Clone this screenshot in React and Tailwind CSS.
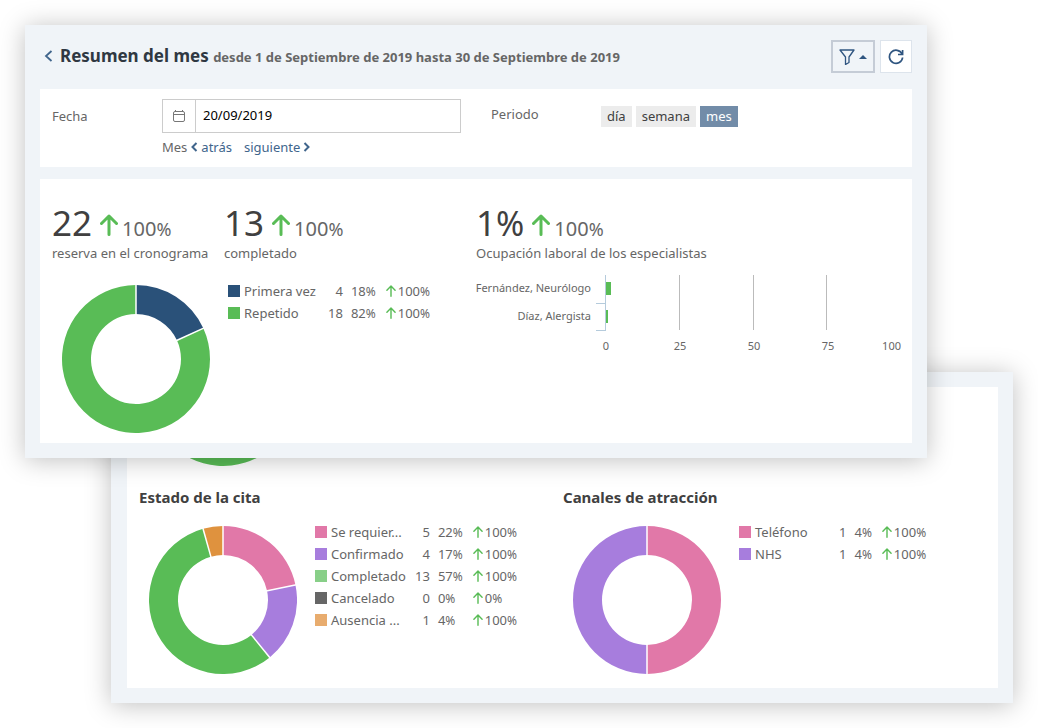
import React from "react";

const visitLegend = [
  { label: "Primera vez", color: "#2a5179", count: 4, share: 18, growth: 100 },
  { label: "Repetido", color: "#59bc56", count: 18, share: 82, growth: 100 },
];

const statusLegend = [
  { label: "Se requier...", color: "#e178a8", count: 5, share: 22, growth: 100 },
  { label: "Confirmado", color: "#a77ddd", count: 4, share: 17, growth: 100 },
  { label: "Completado", color: "#88cf88", count: 13, share: 57, growth: 100 },
  { label: "Cancelado", color: "#666666", count: 0, share: 0, growth: 0 },
  { label: "Ausencia ...", color: "#e8ac6e", count: 1, share: 4, growth: 100 },
];

const channelLegend = [
  { label: "Teléfono", color: "#e178a8", count: 1, share: 4, growth: 100 },
  { label: "NHS", color: "#a77ddd", count: 1, share: 4, growth: 100 },
];

const visitSlices = [
  { value: 4, color: "#2a5179" },
  { value: 18, color: "#59bc56" },
];

const statusSlices = [
  { value: 5, color: "#e178a8" },
  { value: 4, color: "#a77ddd" },
  { value: 13, color: "#59bc56" },
  { value: 1, color: "#df923e" },
];

const channelSlices = [
  { value: 1, color: "#e178a8" },
  { value: 1, color: "#a77ddd" },
];

const specialists = [
  { name: "Fernández, Neurólogo", y: 18, width: 5 },
  { name: "Díaz, Alergista", y: 46, width: 2 },
];

function Donut({ slices, label }) {
  const total = slices.reduce((sum, slice) => sum + slice.value, 0);
  const point = (radius, turn) => {
    const angle = turn * 2 * Math.PI;
    return `${74 + radius * Math.sin(angle)} ${74 - radius * Math.cos(angle)}`;
  };

  let start = 0;
  const arcs = slices.map((slice) => {
    const end = start + slice.value / total;
    const large = end - start > 0.5 ? 1 : 0;
    const d = `M${point(74, start)} A74 74 0 ${large} 1 ${point(74, end)} L${point(45, end)} A45 45 0 ${large} 0 ${point(45, start)} Z`;
    const arc = { d, color: slice.color, start };
    start = end;
    return arc;
  });

  return (
    <svg
      width="148"
      height="148"
      viewBox="0 0 148 148"
      role="img"
      aria-label={label}
      className="shrink-0"
    >
      {arcs.map((arc) => (
        <path key={arc.start} d={arc.d} fill={arc.color} />
      ))}
      {arcs.map((arc) => (
        <path
          key={arc.start}
          d={`M${point(44, arc.start)} L${point(75, arc.start)}`}
          stroke="#fff"
          strokeWidth="1.5"
        />
      ))}
    </svg>
  );
}

function ArrowUp({ className, strokeWidth }) {
  return (
    <svg
      viewBox="0 0 18 22"
      fill="none"
      stroke="#59bc56"
      strokeWidth={strokeWidth}
      strokeLinecap="round"
      strokeLinejoin="round"
      className={className}
      aria-hidden="true"
    >
      <path d="M9 20.5V2M1.5 9.5L9 2l7.5 7.5" />
    </svg>
  );
}

function Legend({ rows }) {
  return (
    <table className="mt-[-5px] self-start text-[13px] leading-[22px] text-[#666]">
      <tbody>
        {rows.map((row) => (
          <tr key={row.label}>
            <td className="p-0">
              <span
                className="block h-3 w-3"
                style={{ backgroundColor: row.color }}
              />
            </td>
            <td className="w-20 min-w-20 p-0 pl-1 whitespace-nowrap">
              {row.label}
            </td>
            <td className="p-0 pl-2 text-right">{row.count}</td>
            <td className="p-0 pl-2">
              {row.share}
              <span className="text-[12px] leading-none">%</span>
            </td>
            <td className="p-0 pl-[10px]">
              <span className="flex items-center gap-[2px]">
                <ArrowUp className="h-3 w-[10px]" strokeWidth="2.6" />
                <span>
                  {row.growth}
                  <span className="text-[12px] leading-none">%</span>
                </span>
              </span>
            </td>
          </tr>
        ))}
      </tbody>
    </table>
  );
}

function Stat({ value, percent, caption, className }) {
  return (
    <div className={className}>
      <div className="flex items-baseline text-[#404040]">
        <span className="text-[35px] leading-[44px]">
          {value}
          {percent && <span className="text-[34px] leading-none">%</span>}
        </span>
        <ArrowUp className="ml-2 h-[22px] w-[18px]" strokeWidth="3" />
        <span className="ml-1 text-[20px] leading-5 text-[#666]">
          100<span className="text-[18px] leading-none">%</span>
        </span>
      </div>
      <p className="text-[13px] leading-4 whitespace-nowrap">{caption}</p>
    </div>
  );
}

function OccupancyChart() {
  return (
    <svg
      width="428"
      height="84"
      viewBox="0 0 428 84"
      role="img"
      aria-label="Ocupación laboral de los especialistas"
      fontSize="11"
      fill="#666"
    >
      {[203, 277, 350].map((x) => (
        <path key={x} d={`M${x + 0.5} 5v55`} stroke="#bbb" />
      ))}
      <path d="M129.5 5v55M120 33.5h10M120 60.5h10" stroke="#b5cbdc" fill="none" />
      {specialists.map((person) => (
        <g key={person.name}>
          <text x="115" y={person.y + 4} textAnchor="end">
            {person.name}
          </text>
          <rect
            x="130"
            y={person.y - 6}
            width={person.width}
            height="13"
            fill="#59bc56"
          />
        </g>
      ))}
      {[0, 25, 50, 75].map((tick, i) => (
        <text key={tick} x={130 + i * 74} y="80" textAnchor="middle">
          {tick}
        </text>
      ))}
      <text x="425" y="80" textAnchor="end">
        100
      </text>
    </svg>
  );
}

function Header() {
  return (
    <header className="mb-4 flex items-center justify-between">
      <div className="flex items-center gap-[7px] pb-0.5 pl-1">
        <button type="button" aria-label="Volver" className="text-[#40658c]">
          <svg
            width="9"
            height="12"
            viewBox="0 0 9 12"
            fill="none"
            stroke="currentColor"
            strokeWidth="1.8"
          >
            <path d="M7.5 1L2 6l5.5 5" />
          </svg>
        </button>
        <h1 className="text-[17px] leading-6 font-bold text-[#2f3842]">
          Resumen del mes{" "}
          <span className="text-[13px] leading-none text-[#666]">
            desde 1 de Septiembre de 2019 hasta 30 de Septiembre de 2019
          </span>
        </h1>
      </div>
      <div className="flex gap-[5px] text-[#2f5580]">
        <button
          type="button"
          aria-label="Filtro"
          className="flex h-[33px] w-11 items-center justify-center gap-1 border-2 border-[#c5ccd6]"
        >
          <svg
            width="16"
            height="16"
            viewBox="0 0 16 16"
            fill="none"
            stroke="currentColor"
            strokeWidth="1.3"
            strokeLinejoin="round"
          >
            <path d="M1 1h14L10 8v5.5L6.500 15.500V8z" />
          </svg>
          <svg width="8" height="4" viewBox="0 0 8 4" fill="currentColor">
            <path d="M0 4L4 0l4 4z" />
          </svg>
        </button>
        <button
          type="button"
          aria-label="Actualizar"
          className="flex h-[33px] w-8 items-center justify-center border border-[#dde4ec] bg-white"
        >
          <svg
            width="16"
            height="16"
            viewBox="0 0 16 16"
            fill="none"
            stroke="currentColor"
            strokeWidth="1.7"
          >
            <path d="M14 5A6.600 6.600 0 1 0 14.600 8.500" />
            <path d="M14.600 1v4.500H10" />
          </svg>
        </button>
      </div>
    </header>
  );
}

function Filters() {
  return (
    <section className="mb-3 flex flex-wrap gap-x-[30px] bg-white px-3 py-[10px]">
      <div className="flex">
        <label htmlFor="fecha" className="w-[110px] leading-[34px]">
          Fecha
        </label>
        <div>
          <div className="flex h-[34px] w-[299px] border border-[#ccc]">
            <span className="flex w-[33px] items-center justify-center border-r border-[#ccc]">
              <svg
                width="12"
                height="12"
                viewBox="0 0 12 12"
                fill="none"
                stroke="#777"
                aria-hidden="true"
              >
                <rect x="0.5" y="1.5" width="11" height="10" rx="1.5" />
                <path d="M0.500 4.500h11M2.500 0v1.500M9.500 0v1.500" />
              </svg>
            </span>
            <input
              id="fecha"
              type="text"
              defaultValue="20/09/2019"
              className="min-w-0 flex-1 px-[7px] text-[13px] text-black outline-none"
            />
          </div>
          <div className="mt-1 flex items-center leading-5">
            <span className="mr-1">Mes</span>
            <a href="#atras" className="flex items-center gap-[3px] text-[#40658c]">
              <svg
                width="7"
                height="10"
                viewBox="0 0 7 10"
                fill="none"
                stroke="currentColor"
                strokeWidth="2"
              >
                <path d="M5.500 1l-4 4 4 4" />
              </svg>
              atrás
            </a>
            <a
              href="#siguiente"
              className="ml-3 flex items-center gap-[3px] text-[#40658c]"
            >
              siguiente
              <svg
                width="7"
                height="10"
                viewBox="0 0 7 10"
                fill="none"
                stroke="currentColor"
                strokeWidth="2"
              >
                <path d="M1.500 1l4 4-4 4" />
              </svg>
            </a>
          </div>
        </div>
      </div>
      <div className="flex items-start">
        <span id="periodo" className="w-[110px] leading-[30px]">
          Periodo
        </span>
        <div
          role="group"
          aria-labelledby="periodo"
          className="mt-[7px] flex gap-1 leading-[21px] text-[#404040]"
        >
          <button type="button" className="bg-[#ececec] px-[6px]">
            día
          </button>
          <button type="button" className="bg-[#ececec] px-[6px]">
            semana
          </button>
          <button
            type="button"
            aria-pressed="true"
            className="bg-[#728ca8] px-[6px] text-white"
          >
            mes
          </button>
        </div>
      </div>
    </section>
  );
}

function Breakdown({ title, slices, rows }) {
  return (
    <section>
      <h2 className="text-[15px] leading-5 font-bold text-[#404040]">
        {title}
      </h2>
      <div className="mt-[19px] flex gap-[18px] pl-[10px]">
        <Donut slices={slices} label={title} />
        <Legend rows={rows} />
      </div>
    </section>
  );
}

function App() {
  return (
    <main
      className="min-h-screen bg-white p-[25px] text-[13px] text-[#666]"
      style={{ fontFamily: '"Noto Sans", sans-serif' }}
    >
      <div className="relative z-10 mr-[86px] bg-[#f0f4f8] p-[15px] shadow-[0_2px_24px_rgba(0,0,0,0.25)]">
        <Header />
        <Filters />
        <section className="flex flex-wrap bg-white pt-[22px] pr-2 pb-[10px] pl-3">
          <div className="w-[424px]">
            <div className="flex">
              <Stat
                value="22"
                caption="reserva en el cronograma"
                className="w-[172px]"
              />
              <Stat value="13" caption="completado" />
            </div>
            <div className="mt-6 flex gap-[18px] pl-[10px]">
              <Donut slices={visitSlices} label="Primera vez y repetido" />
              <Legend rows={visitLegend} />
            </div>
          </div>
          <div>
            <Stat
              value="1"
              percent
              caption="Ocupación laboral de los especialistas"
            />
            <div className="mt-[9px]">
              <OccupancyChart />
            </div>
          </div>
        </section>
      </div>

      <div className="mt-[-86px] ml-[86px] bg-[#f0f4f8] py-[15px] pr-[15px] pl-4 shadow-[0_2px_24px_rgba(0,0,0,0.25)]">
        <div className="overflow-hidden bg-white pb-[14px] pl-3">
          <div className="mt-[-69px] mb-[21px] pl-[10px]">
            <Donut
              slices={[
                { value: 11, color: "#2a5179" },
                { value: 30, color: "#59bc56" },
              ]}
              label="Citas"
            />
          </div>
          <div className="flex flex-wrap">
            <div className="w-[424px]">
              <Breakdown
                title="Estado de la cita"
                slices={statusSlices}
                rows={statusLegend}
              />
            </div>
            <Breakdown
              title="Canales de atracción"
              slices={channelSlices}
              rows={channelLegend}
            />
          </div>
        </div>
      </div>
    </main>
  );
}

export default App;
